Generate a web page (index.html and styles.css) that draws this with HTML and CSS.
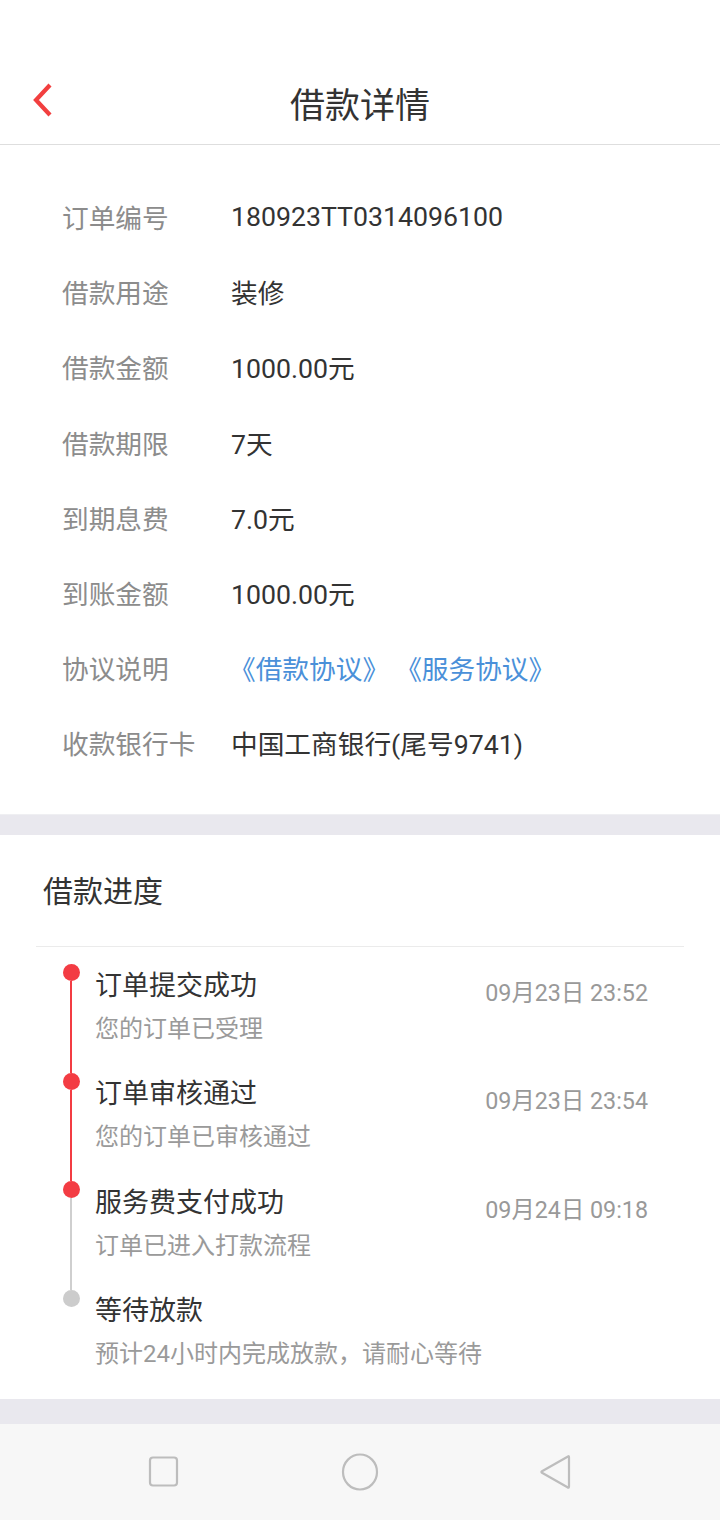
FILE: index.html
```html
<!DOCTYPE html>
<html lang="zh-CN">
<head>
<meta charset="utf-8">
<title>借款详情</title>
<link rel="stylesheet" href="styles.css">
</head>
<body>
<div class="page">
  <div class="statusbar"></div>
  <header class="header">
    <svg class="back" width="24" height="36" viewBox="0 0 24 36">
      <polyline points="19,3 5,18 19,33" fill="none" stroke="#f23f3f" stroke-width="4.2" stroke-linecap="butt" stroke-linejoin="miter"/>
    </svg>
    <h1 class="title">借款详情</h1>
  </header>

  <section class="details">
    <div class="row"><span class="label">订单编号</span><span class="value">180923TT0314096100</span></div>
    <div class="row"><span class="label">借款用途</span><span class="value">装修</span></div>
    <div class="row"><span class="label">借款金额</span><span class="value">1000.00元</span></div>
    <div class="row"><span class="label">借款期限</span><span class="value">7天</span></div>
    <div class="row"><span class="label">到期息费</span><span class="value">7.0元</span></div>
    <div class="row"><span class="label">到账金额</span><span class="value">1000.00元</span></div>
    <div class="row"><span class="label">协议说明</span><span class="value links"><a class="link">《借款协议》</a><a class="link">《服务协议》</a></span></div>
    <div class="row"><span class="label">收款银行卡</span><span class="value">中国工商银行(尾号9741)</span></div>
  </section>

  <div class="band"></div>

  <section class="progress">
    <div class="progress-head">借款进度</div>
    <div class="steps">
      <div class="step">
        <div class="rail"><span class="seg seg-top none"></span><span class="dot red"></span><span class="seg seg-bottom red"></span></div>
        <div class="step-body">
          <div class="step-text">
            <div class="step-title">订单提交成功</div>
            <div class="step-sub">您的订单已受理</div>
          </div>
          <div class="step-time">09月23日 23:52</div>
        </div>
      </div>
      <div class="step">
        <div class="rail"><span class="seg seg-top red"></span><span class="dot red"></span><span class="seg seg-bottom red"></span></div>
        <div class="step-body">
          <div class="step-text">
            <div class="step-title">订单审核通过</div>
            <div class="step-sub">您的订单已审核通过</div>
          </div>
          <div class="step-time">09月23日 23:54</div>
        </div>
      </div>
      <div class="step">
        <div class="rail"><span class="seg seg-top red"></span><span class="dot red"></span><span class="seg seg-bottom gray"></span></div>
        <div class="step-body">
          <div class="step-text">
            <div class="step-title">服务费支付成功</div>
            <div class="step-sub">订单已进入打款流程</div>
          </div>
          <div class="step-time">09月24日 09:18</div>
        </div>
      </div>
      <div class="step">
        <div class="rail"><span class="seg seg-top gray"></span><span class="dot gray"></span><span class="seg seg-bottom none"></span></div>
        <div class="step-body">
          <div class="step-text">
            <div class="step-title">等待放款</div>
            <div class="step-sub">预计24小时内完成放款，请耐心等待</div>
          </div>
        </div>
      </div>
    </div>
  </section>

  <div class="band band-bottom"></div>

  <nav class="navbar">
    <div class="nav-cell">
      <svg width="32" height="32" viewBox="0 0 32 32"><rect x="2" y="1.5" width="27" height="28" rx="3" fill="none" stroke="#bdbdbd" stroke-width="2.2"/></svg>
    </div>
    <div class="nav-cell">
      <svg width="40" height="40" viewBox="0 0 40 40"><ellipse cx="20" cy="20" rx="17" ry="17.5" fill="none" stroke="#bdbdbd" stroke-width="2.2"/></svg>
    </div>
    <div class="nav-cell">
      <svg width="36" height="40" viewBox="0 0 36 40"><path d="M30 4.5 Q31 3.5 31 5.5 L31 34.5 Q31 36.5 29.5 35.3 L4 20.8 Q2.8 20 4 19.2 Z" fill="none" stroke="#bdbdbd" stroke-width="2.2" stroke-linejoin="round"/></svg>
    </div>
  </nav>
</div>
</body>
</html>
```

FILE: styles.css
```css
* { box-sizing: border-box; }
html, body { margin: 0; padding: 0; }
body {
  background: #ffffff;
  font-family: Roboto, "Noto Sans CJK SC", sans-serif;
  color: #333333;
}
.page {
  width: 720px;
  height: 1520px;
  display: flex;
  flex-direction: column;
  overflow: hidden;
}
.statusbar { height: 60px; background: #ffffff; }

.header {
  height: 85px;
  display: flex;
  align-items: center;
  justify-content: center;
  position: relative;
  border-bottom: 1px solid #dedede;
}
.back {
  position: absolute;
  left: 31px;
  top: 22px;
}
.title {
  margin: 0;
  font-size: 35px;
  font-weight: 400;
  color: #333333;
  line-height: 1;
  font-family: "Noto Sans CJK SC", sans-serif;
}

.details {
  padding: 34px 0 33px 62px;
}
.row {
  height: 75.2px;
  display: flex;
  align-items: center;
  font-size: 26.7px;
}
.label {
  width: 169px;
  color: #8c8c8c;
  flex-shrink: 0;
  font-family: "Noto Sans CJK SC", sans-serif;
}
.value { color: #333333; }
.links { display: flex; gap: 6px; margin-left: -2px; }
.link { color: #4a90d9; font-family: "Noto Sans CJK SC", sans-serif; text-decoration: none; }

.band {
  height: 21px;
  background: #e9e8ee;
  border-top: 1px solid #efeff2;
  flex-shrink: 0;
}
.band-bottom { height: 25px; border-top: none; }

.progress {
  padding-bottom: 18px;
}
.progress-head {
  height: 112px;
  margin: 0 36px;
  display: flex;
  align-items: center;
  padding-left: 7px;
  padding-bottom: 2px;
  font-size: 30px;
  color: #333333;
  border-bottom: 1px solid #ebebeb;
  font-family: "Noto Sans CJK SC", sans-serif;
}
.steps { display: flex; flex-direction: column; }
.step {
  height: 108.5px;
  display: flex;
  padding-left: 62px;
  padding-right: 72px;
}
.rail {
  width: 18px;
  display: flex;
  flex-direction: column;
  align-items: center;
  flex-shrink: 0;
}
.seg { width: 2px; display: block; }
.seg-top { height: 17.5px; }
.seg-bottom { flex: 1; }
.dot {
  width: 17px;
  height: 17px;
  border-radius: 50%;
  flex-shrink: 0;
  display: block;
}
.seg.red, .dot.red { background: #f33c43; }
.seg.gray { background: #cfcfcf; }
.dot.gray { background: #cccccc; }
.seg.none { background: transparent; }

.step-body {
  flex: 1;
  display: flex;
  justify-content: space-between;
  margin-left: 15px;
  padding-top: 19px;
}
.step-title {
  font-size: 27px;
  line-height: 36px;
  color: #333333;
  font-family: "Noto Sans CJK SC", sans-serif;
}
.step-sub {
  font-size: 24px;
  line-height: 32px;
  margin-top: 11px;
  color: #9a9a9a;
}
.step-time {
  font-size: 23.3px;
  line-height: 36px;
  padding-top: 9px;
  color: #999999;
}

.navbar {
  flex: 1;
  background: #f7f7f7;
  display: grid;
  grid-template-columns: repeat(3, 196px);
  justify-content: center;
  align-items: center;
}
.nav-cell {
  display: flex;
  justify-content: center;
  align-items: center;
}
```
